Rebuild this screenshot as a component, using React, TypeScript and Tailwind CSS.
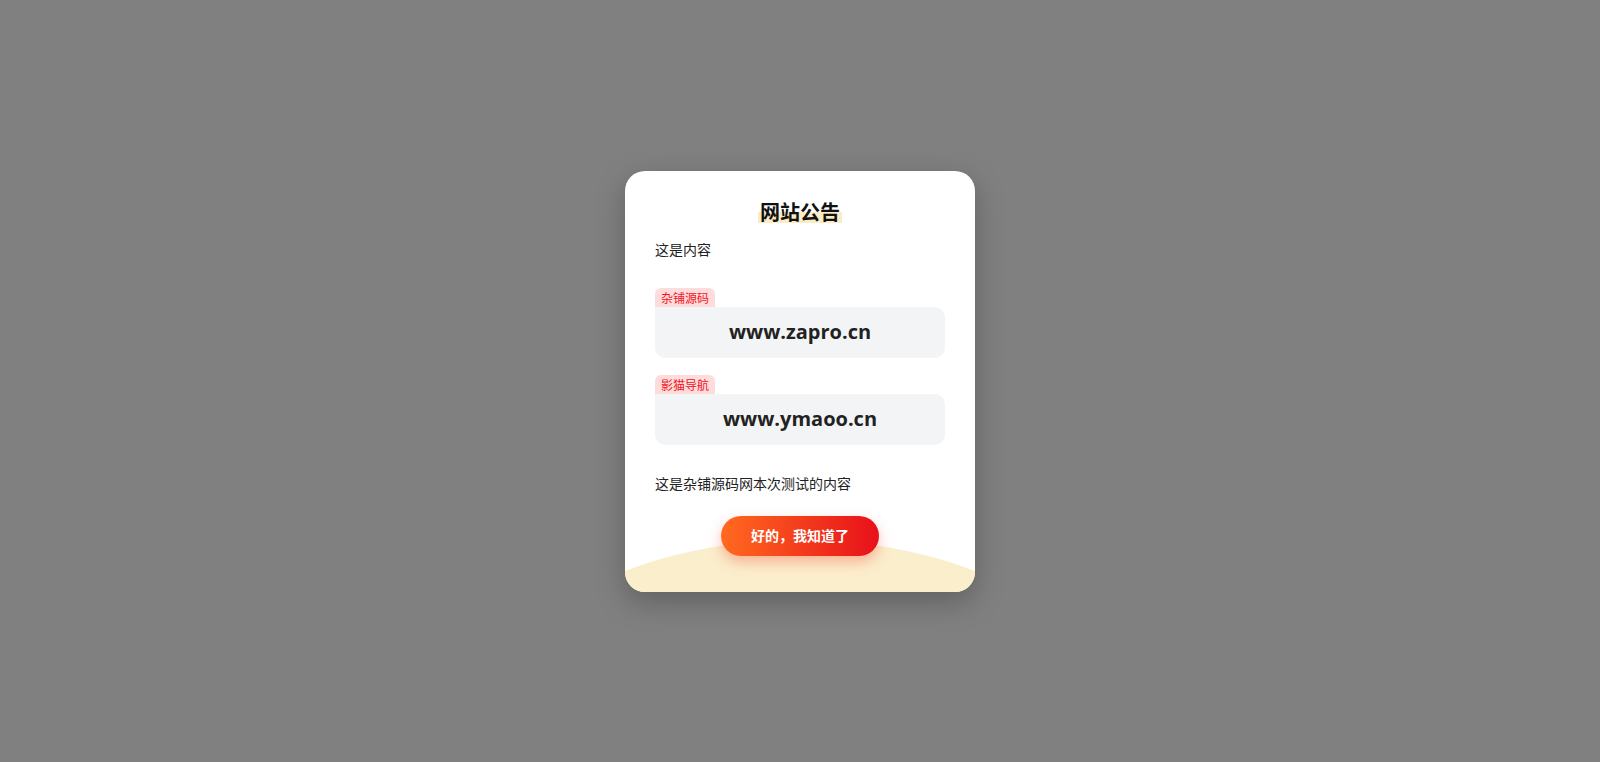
export default function App() {
  const cjk = { fontFamily: '"Noto Sans CJK SC", "Noto Sans", sans-serif' };
  const url = { fontFamily: '"Open Sans", "Noto Sans CJK SC", sans-serif' };
  const sites = [
    { tag: "杂铺源码", url: "www.zapro.cn" },
    { tag: "影猫导航", url: "www.ymaoo.cn" },
  ];
  return (
    <div className="w-full h-[762px] bg-[#808080] overflow-hidden flex items-center justify-center" style={cjk}>
      <div className="relative w-[350px] h-[421px] rounded-[20px] bg-white overflow-hidden shadow-[0_10px_30px_rgba(0,0,0,0.25)]">
        <div className="absolute left-1/2 -translate-x-1/2 top-[369px] w-[640px] h-[380px] rounded-[50%] bg-[#fbeecd]" />
        <div className="relative px-[30px] pt-[27px]">
          <div className="flex justify-center">
            <span className="block text-[20px] leading-[28px] font-bold text-[#111] bg-[linear-gradient(transparent_50%,#fbecc6_50%,#fbecc6_90%,transparent_90%)] px-[2px]">
              网站公告
            </span>
          </div>
          <p className="mt-[12px] text-[14px] leading-[22px] text-[#222]">这是内容</p>
          <div className="mt-[28px] flex flex-col gap-[17px]">
            {sites.map((s) => (
              <div key={s.tag} className="flex flex-col items-start">
                <div className="px-[6px] h-[19px] text-[12px] leading-[19px] rounded-t-[6px] bg-[#ffdcdc] text-[#f0141e]">
                  {s.tag}
                </div>
                <div
                  className="w-full h-[51px] rounded-[10px] rounded-tl-none bg-[#f3f4f6] flex items-center justify-center text-[20px] font-bold text-[#222]"
                  style={url}
                >
                  {s.url}
                </div>
              </div>
            ))}
          </div>
          <p className="mt-[27px] text-[14px] leading-[22px] text-[#222]">这是杂铺源码网本次测试的内容</p>
          <div className="mt-[22px] flex justify-center">
            <button className="w-[158px] h-[40px] rounded-full bg-[linear-gradient(90deg,#ff6a1f,#e8101a)] text-white text-[14px] font-bold shadow-[0_6px_14px_rgba(240,70,40,0.35)]">
              好的，我知道了
            </button>
          </div>
        </div>
      </div>
    </div>
  );
}
